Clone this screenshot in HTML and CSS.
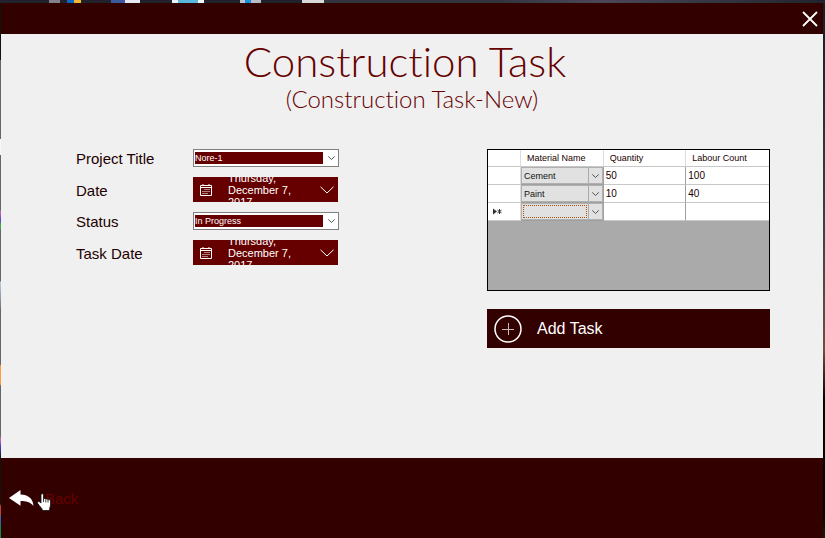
FILE: index.html
```
<!DOCTYPE html>
<html lang="en">
<head>
<meta charset="utf-8">
<meta name="viewport" content="width=device-width, initial-scale=1">
<title>Construction Task</title>
<link rel="stylesheet" href="styles.css">
</head>
<body>
<svg class="symbols" aria-hidden="true">
  <symbol id="chevron" viewBox="0 0 14 8"><path d="M.5 .8 7 7 13.500 .8" fill="none" stroke="currentColor" vector-effect="non-scaling-stroke"/></symbol>
  <symbol id="calendar" viewBox="0 0 12 12">
    <path d="M.5 1.500h11v10H.5zM.5 3.500h11M3 0v2M9 0v2" fill="none" stroke="currentColor"/>
    <path d="M4.500 5.500h1m1 0h1m1 0h1m-7 2h1m1 0h1m1 0h1m1 0h1m-7 2h1m1 0h1m1 0h1" fill="none" stroke="currentColor"/>
  </symbol>
</svg>
<div class="window">
  <header class="titlebar">
    <button class="close" type="button" aria-label="Close">
      <svg width="16" height="16" viewBox="0 0 16 16"><path d="M1 1 15 15M15 1 1 15" stroke="currentColor" stroke-width="1.800" fill="none"/></svg>
    </button>
  </header>

  <main class="content">
    <h1 class="title">Construction Task</h1>
    <p class="subtitle">(Construction Task-New)</p>

    <div class="columns">
      <form class="form">
        <label for="project">Project Title</label>
        <div class="combo">
          <select id="project"><option>Nore-1</option></select>
          <svg class="combo-arrow"><use href="#chevron"/></svg>
        </div>

        <label for="date">Date</label>
        <button id="date" class="date" type="button">
          <svg class="date-icon"><use href="#calendar"/></svg>
          <span class="date-text">Thursday, December 7, 2017</span>
          <svg class="date-arrow"><use href="#chevron"/></svg>
        </button>

        <label for="status">Status</label>
        <div class="combo">
          <select id="status"><option>In Progress</option></select>
          <svg class="combo-arrow"><use href="#chevron"/></svg>
        </div>

        <label for="task-date">Task Date</label>
        <button id="task-date" class="date" type="button">
          <svg class="date-icon"><use href="#calendar"/></svg>
          <span class="date-text">Thursday, December 7, 2017</span>
          <svg class="date-arrow"><use href="#chevron"/></svg>
        </button>
      </form>

      <section class="materials">
        <div class="grid">
          <table>
            <thead>
              <tr><th class="marker"></th><th>Material Name</th><th>Quantity</th><th>Labour Count</th></tr>
            </thead>
            <tbody>
              <tr>
                <td></td>
                <td class="pick"><div class="cell"><select aria-label="Material, row 1"><option>Cement</option></select><svg class="combo-arrow"><use href="#chevron"/></svg></div></td>
                <td>50</td><td>100</td>
              </tr>
              <tr>
                <td></td>
                <td class="pick"><div class="cell"><select aria-label="Material, row 2"><option>Paint</option></select><svg class="combo-arrow"><use href="#chevron"/></svg></div></td>
                <td>10</td><td>40</td>
              </tr>
              <tr>
                <td><svg class="new-row" width="9" height="7" viewBox="0 0 9 7"><path d="M0 .5v6l4-3z" fill="#333"/><path d="M6.500 1v5M4.500 2.200l4 2.600M8.500 2.200l-4 2.600" stroke="#333" fill="none"/></svg></td>
                <td class="pick current"><div class="cell"><select aria-label="Material, new row"><option></option></select><svg class="combo-arrow"><use href="#chevron"/></svg></div></td>
                <td></td><td></td>
              </tr>
            </tbody>
          </table>
        </div>
        <button class="add" type="button">
          <svg width="28" height="28" viewBox="0 0 28 28" fill="none" stroke="currentColor"><circle cx="14" cy="14" r="13" stroke-width="1.500"/><path d="M8 14.500h12M14.500 8v12" stroke="#cbbcbc"/></svg>
          <span>Add Task</span>
        </button>
      </section>
    </div>
  </main>

  <footer class="footer">
    <a class="back" href="#">
      <svg width="25" height="17" viewBox="0 0 25 17"><path d="M0 8 11.500 0v4.500C19 4.500 24 8.500 24.500 16 21 11.800 17 11 11.500 11v4.800z" fill="#fff"/></svg>
      <span>Back</span>
      <svg class="pointer" width="14" height="18" viewBox="0 0 14 18"><path d="M4 10V2.200C4 .2 6.500 .2 6.500 2.200V6c.5-.8 2-.6 2.300.3.600-.6 1.900-.4 2.200.5 1-.6 2.500 0 2.500 1.400V12c0 1.500-1 2.500-1 5.500H5.500C5.500 15.500 2.500 13.500.7 10.300c-.8-1.500 1-2.500 2-1.300z" fill="#fff" stroke="#111" stroke-width=".8"/><path d="M6.500 6v3M8.800 6.500v3M11 7v2.500" stroke="#111" stroke-width=".8"/></svg>
    </a>
  </footer>
</div>
</body>
</html>
```

FILE: styles.css
```
* { box-sizing: border-box; }

body {
  margin: 0;
  min-height: 100vh;
  display: flex;
  padding: 3px 2px 0 1px;
  font-family: "Liberation Sans", Arial, sans-serif;
  font-size: 15px;
  color: #200;
  /* slivers of the desktop behind the window */
  background:
    linear-gradient(90deg, #22222c 49px, #87808a 49px 60px, #22222c 60px 67px, #0868c8 67px 74px, #f5b536 74px 81px, #22222c 81px 111px, #3c59a0 111px 125px, #e8e8f0 125px 140px, #22222c 140px 172px, #e8f4f8 172px 178px, #58b8dc 178px 198px, #f4f4f4 198px 204px, #22222c 204px 240px, #b8c4d0 240px 245px, #1890e0 245px 251px, #b8bcc4 251px 261px, #22222c 261px 302px, #d8d8d8 302px 324px, #34343f 324px 500px, #4b4858 600px, #20242c) 0 0 / 100% 3px no-repeat,
    linear-gradient(#111 60px, #666 60px 139px, #f8f8f8 139px 155px, #666 155px 210px, #c6b 212px, #54c 220px, #3b3 226px, #666 231px 281px, #bcd 282px, #9bd6 308px, #666 309px 364px, #f94 366px 384px, #666 386px 435px, #c6b 440px, #44c 446px, #111 458px 504px, #b43 506px 514px, #36a 516px 524px, #185 526px) 0 0 / 1px 100% no-repeat,
    linear-gradient(#141c26, #3a4048 220px, #6a5040 350px, #000 400px 510px, #132008);
}

button, select { font: inherit; margin: 0; border-radius: 0; }
button { border: 0; cursor: pointer; }
.symbols { position: absolute; width: 0; height: 0; }

.window {
  flex: 1;
  display: flex;
  flex-direction: column;
  background: #f0f0f0;
}

.titlebar {
  display: flex;
  justify-content: flex-end;
  height: 31px;
  padding-right: 5px;
  background: #300;
}
.close { display: flex; align-items: center; padding: 0; background: none; color: #fff; }

.content { flex: 1; }

.title, .subtitle {
  margin: 0;
  font-family: "Century Gothic", Lato, "DejaVu Sans", sans-serif;
  font-weight: 300;
  font-variant-ligatures: none;
  text-align: center;
  color: #600;
}
.title { padding-right: 14px; font-size: 42px; line-height: 54px; }
.subtitle { font-size: 24px; line-height: 22px; }

.columns {
  display: flex;
  justify-content: space-between;
  align-items: flex-start;
  gap: 24px;
  padding: 39px 53px 24px 74px;
}

.form {
  display: grid;
  grid-template-columns: 118px 146px;
  row-gap: 10px;
  align-items: center;
}
.form label { padding: 2px 0 0 1px; line-height: 16px; white-space: nowrap; }

.combo, .cell { position: relative; display: flex; }
.combo { height: 18px; border: 1px solid #808080; background: #fff; }
.combo select, .cell select {
  appearance: none;
  flex: 1;
  width: 100%;
  border: 0;
  outline: 0;
  font-size: 9px;
  line-height: 12px;
}
.combo select { padding: 2px 15px 2px 1px; background: #600 content-box; color: #fff; }
.combo-arrow { position: absolute; right: 3px; top: 6px; width: 7px; height: 4px; color: #555; }

.date {
  display: flex;
  align-items: center;
  width: 145px;
  height: 25px;
  padding: 0 4px 0 7px;
  overflow: hidden;
  background: #600;
  color: #fff;
  font-size: 11px;
  line-height: 12px;
  text-align: left;
}
.date-icon { flex: none; width: 12px; height: 12px; }
.date-text { flex: 1; margin: 0 24px 0 16px; }
.date-arrow { flex: none; width: 14px; height: 8px; }

.materials { flex: 0 1 283px; display: flex; flex-direction: column; gap: 18px; }
.grid { min-height: 142px; border: 1px solid #000; background: #aaa; }

table {
  width: 100%;
  table-layout: fixed;
  border-collapse: separate;
  border-spacing: 0;
  background: #fff;
  font-size: 10px;
  line-height: 12px;
}
th, td { height: 18px; padding: 0 2px; text-align: left; border-right: 1px solid #a0a0a0; border-bottom: 1px solid #c8c8c8; }
th { height: 17px; padding: 0 6px; font-size: 9px; font-weight: 400; border-right-color: #ddd; white-space: nowrap; }
th:last-child, td:last-child { border-right: 0; }
.marker { width: 33px; }
td:first-child { padding-left: 5px; border-right-color: #ddd; }
.new-row { display: block; }
.pick { padding: 0; border-color: #a0a0a0; }
.cell { height: 17px; border: 1px solid #b0b0b0; background: #e1e1e1; }
.cell select { padding: 0 14px 0 2px; background: none; color: #111; }
.cell::after { content: ""; position: absolute; top: 0; bottom: 0; right: 13px; width: 1px; background: #aaa; }
.current select { margin: 1px 15px 1px 1px; padding: 0; border: 1px dotted #b05010; }

.add {
  display: flex;
  align-items: center;
  gap: 15px;
  height: 39px;
  padding: 0 7px;
  background: #300;
  color: #fff;
  font-size: 16px;
}

.footer { display: flex; align-items: center; height: 80px; padding-left: 8px; background: #300; }
.back { position: relative; display: flex; align-items: center; gap: 11px; color: #600; text-decoration: none; }
.pointer { position: absolute; left: 28px; top: 3px; }
```
